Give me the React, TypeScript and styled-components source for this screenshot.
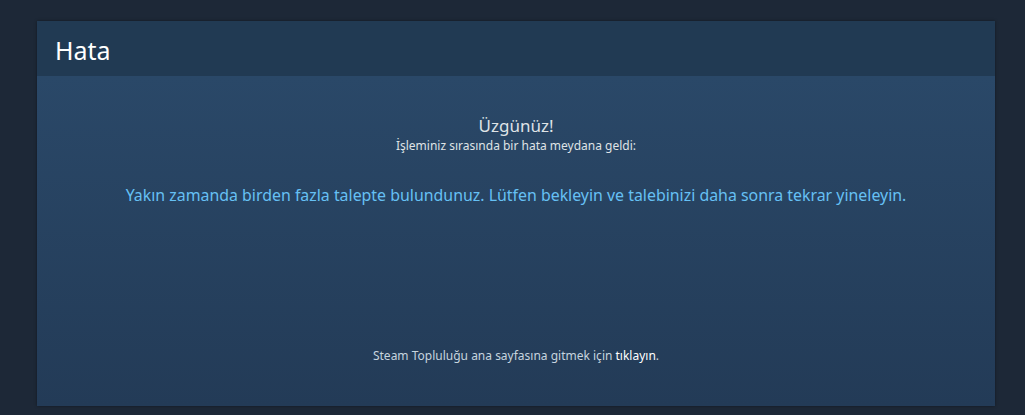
import {createGlobalStyle} from "styled-components"
import styled from "styled-components"

const GlobalStyle = createGlobalStyle`
html, body {
  margin     : 0;
  padding    : 0;
  background : #1d2837;
  font-family: "Motiva Sans", "Noto Sans", Arial, sans-serif;
}
`;

const Page = styled.div`
width          : 1025px;
height         : 415px;
box-sizing     : border-box;
padding        : 21px 30px 9px 37px;
background     : #1d2837;
display        : flex;
`;

const Panel = styled.div`
flex           : 1;
display        : flex;
flex-direction : column;
box-shadow     : 0 0 3px rgba(0, 0, 0, 0.4);
`;

const Header = styled.div`
height         : 55px;
box-sizing     : border-box;
padding        : 3px 18px 0;
display        : flex;
align-items    : center;
background     : #213a53;
`;

const Title = styled.h1`
margin         : 0;
font-size      : 25px;
font-weight    : 400;
line-height    : 30px;
color          : #ffffff;
`;

const Body = styled.div`
flex           : 1;
display        : flex;
flex-direction : column;
align-items    : center;
padding-top    : 39px;
background     : linear-gradient(to bottom, #2a4868 0%, #233b57 100%);
`;

const Sorry = styled.div`
font-size      : 17px;
color          : #dfe3e6;
line-height    : 22px;
`;

const Sub = styled.div`
font-size      : 12px;
color          : #dfe3e6;
line-height    : 16px;
margin-top     : 1px;
`;

const Message = styled.div`
margin-top     : 31px;
font-size      : 15.9px;
color          : #66c0f4;
line-height    : 21px;
`;

const Footer = styled.div`
margin-top     : auto;
margin-bottom  : 42px;
font-size      : 12px;
line-height    : 16px;
color          : #c6d4df;
`;

const Link = styled.a`
color          : #ffffff;
text-decoration: none;
`;

export default function App() {
	return (
		<>
			<GlobalStyle/>
			<Page>
				<Panel>
					<Header>
						<Title>Hata</Title>
					</Header>
					<Body>
						<Sorry>Üzgünüz!</Sorry>
						<Sub>İşleminiz sırasında bir hata meydana geldi:</Sub>
						<Message>Yakın zamanda birden fazla talepte bulundunuz. Lütfen bekleyin ve talebinizi daha sonra tekrar yineleyin.</Message>
						<Footer>Steam Topluluğu ana sayfasına gitmek için <Link href="#">tıklayın</Link>.</Footer>
					</Body>
				</Panel>
			</Page>
		</>
	)
}
